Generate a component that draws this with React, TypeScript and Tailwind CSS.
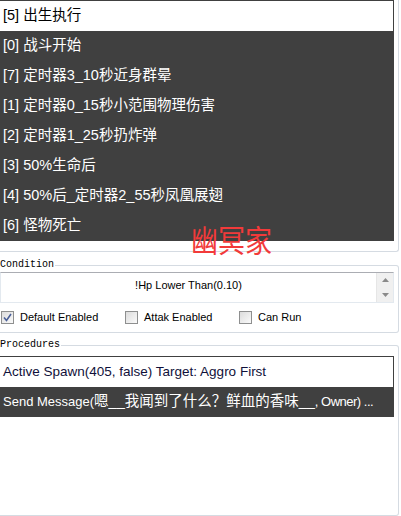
import React from 'react';

const triggers = [
  { id: 5, name: '出生执行' },
  { id: 0, name: '战斗开始' },
  { id: 7, name: '定时器3_10秒近身群晕' },
  { id: 1, name: '定时器0_15秒小范围物理伤害' },
  { id: 2, name: '定时器1_25秒扔炸弹' },
  { id: 3, name: '50%生命后' },
  { id: 4, name: '50%后_定时器2_55秒凤凰展翅' },
  { id: 6, name: '怪物死亡' },
];

const CheckBox = ({ checked, label }: { checked?: boolean; label: string }) => (
  <div className="flex items-center gap-[6px]">
    <div className="w-[13px] h-[13px] border border-[#8e8f8f] bg-gradient-to-br from-[#dcdcdc] to-[#fafafa] flex items-center justify-center">
      {checked && (
        <svg width="9" height="9" viewBox="0 0 9 9">
          <path d="M1 4.5 L3.5 7.5 L8 1" fill="none" stroke="#4a5f97" strokeWidth="1.6" />
        </svg>
      )}
    </div>
    <span className="text-[11px] text-black">{label}</span>
  </div>
);

const GroupLabel = ({ text }: { text: string }) => (
  <span className="absolute left-0 -top-[7px] bg-white pr-[1px] font-['Liberation_Mono',monospace] text-[10px] leading-[12px] text-black">
    {text}
  </span>
);

export default function App() {
  return (
    <div className="w-[401px] h-[516px] bg-white overflow-hidden relative font-['Liberation_Sans','Noto_Sans_CJK_SC',sans-serif]">
      {/* trigger list */}
      <div className="w-[399px] h-[252px] border-r border-b border-[#d5dbe2] rounded-br-[3px]">
        <div className="w-[394px] border-t border-r border-[#404040]">
          {triggers.map((t, i) => (
            <div
              key={t.id}
              className={`h-[30px] flex items-center pl-[3px] text-[14.5px] whitespace-nowrap ${
                i === 0 ? 'bg-white text-black' : 'bg-[#404040] text-white'
              }`}
            >
              [{t.id}] {t.name}
            </div>
          ))}
        </div>
      </div>

      {/* watermark */}
      <div className="absolute left-[191px] top-[224px] text-[27px] leading-none text-[#f23a3a] font-['Noto_Sans_CJK_SC',sans-serif] scale-y-[1.12] origin-top">
        幽冥家
      </div>

      {/* condition */}
      <div className="relative mt-[13px] w-[399px] h-[68px] border-t border-r border-b border-[#d5dbe2] rounded-r-[3px]">
        <GroupLabel text="Condition" />
        <div className="mt-[6px] w-[394px] h-[31px] flex border border-[#e3e9ef] border-t-[#abadb3]">
          <div className="flex-1 text-center text-[11px] pt-[4px] text-black">!Hp Lower Than(0.10)</div>
          <div className="w-[17px] bg-[#f0f0f0] border-l border-[#e6e6e6] flex flex-col items-center justify-between py-[5px]">
            <svg width="7" height="4" viewBox="0 0 7 4">
              <path d="M0 4 L3.5 0 L7 4 Z" fill="#8a8a8a" />
            </svg>
            <svg width="7" height="4" viewBox="0 0 7 4">
              <path d="M0 0 L3.5 4 L7 0 Z" fill="#8a8a8a" />
            </svg>
          </div>
        </div>
        <div className="mt-[6px] flex items-center pl-[1px]">
          <div className="w-[124px]">
            <CheckBox checked label="Default Enabled" />
          </div>
          <div className="w-[114px]">
            <CheckBox label="Attak Enabled" />
          </div>
          <CheckBox label="Can Run" />
        </div>
      </div>

      {/* procedures */}
      <div className="relative mt-[12px] w-[399px] h-[171px] border-t border-r border-b border-[#d5dbe2] rounded-r-[3px] pt-[10px]">
        <GroupLabel text="Procedures" />
        <div className="w-[394px] border-t border-r border-[#404040]">
          <div className="h-[30px] flex items-center pl-[3px] text-[13.5px] whitespace-nowrap bg-white text-[#10103a]">
            Active Spawn(405, false) Target: Aggro First
          </div>
          <div className="h-[30px] flex items-center pl-[3px] text-[13px] whitespace-nowrap bg-[#404040] text-white overflow-hidden">
            Send Message(
            <span className="text-[14.5px]">嗯__我闻到了什么？鲜血的香味__</span>
            <span className="tracking-[-0.5px]">, Owner) ...</span>
          </div>
        </div>
      </div>
    </div>
  );
}
